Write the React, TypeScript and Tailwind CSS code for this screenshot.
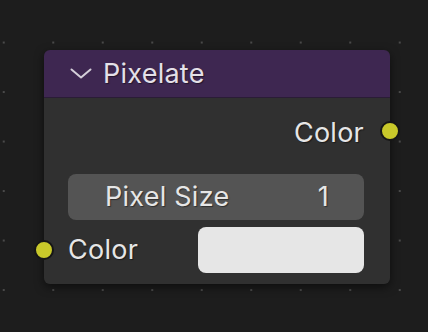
import React from "react";

export default function App() {
  return (
    <div
      className="w-[428px] h-[332px] bg-[#1d1d1d] pl-[44px] pt-[50px] bg-[radial-gradient(circle,#4a4a4a_0.7px,transparent_1.1px)] bg-[length:49.5px_49.5px] bg-[position:-21px_17.8px]"
      style={{ fontFamily: "Inter, 'Noto Sans', sans-serif" }}
    >
      <div className="relative w-[346px] rounded-[6px] shadow-[0_3px_10px_rgba(0,0,0,0.55)] text-[27px] tracking-[0.25px] leading-[32px] text-[#e6e6e6] [text-shadow:1px_1px_1px_rgba(0,0,0,0.45)]">
        {/* Header */}
        <div className="h-[48px] rounded-t-[6px] bg-[#3e2751] border-b border-[#2a1c36] flex items-center pl-[26px]">
          <svg width="22" height="11" viewBox="0 0 22 11" className="shrink-0">
            <path d="M1.5 1.5 L11 9.5 L20.5 1.5" fill="none" stroke="#d4cfd9" strokeWidth="2" strokeLinecap="round" strokeLinejoin="round" />
          </svg>
          <span className="ml-[11px] text-[#e4e0e8]">Pixelate</span>
        </div>
        {/* Body */}
        <div className="rounded-b-[6px] bg-[#303030] pl-[24px] pr-[26px] pt-[19px] pb-[11px] flex flex-col">
          <div className="h-[32px] flex justify-end items-center">
            <span>Color</span>
          </div>
          <div className="mt-[25px] h-[46px] rounded-[8px] bg-[#545454] flex items-center justify-between pl-[37px] pr-[35px]">
            <span>Pixel Size</span>
            <span>1</span>
          </div>
          <div className="mt-[7px] h-[46px] flex items-center justify-between">
            <span>Color</span>
            <div className="w-[166px] h-[46px] rounded-[8px] bg-[#e6e6e6]" />
          </div>
        </div>
        {/* Sockets */}
        <div className="absolute left-[336px] top-[71px] w-[20px] h-[20px] rounded-full bg-[#c8c82a] border-2 border-[#161616]" />
        <div className="absolute left-[-10px] top-[190px] w-[20px] h-[20px] rounded-full bg-[#c8c82a] border-2 border-[#161616]" />
      </div>
    </div>
  );
}
